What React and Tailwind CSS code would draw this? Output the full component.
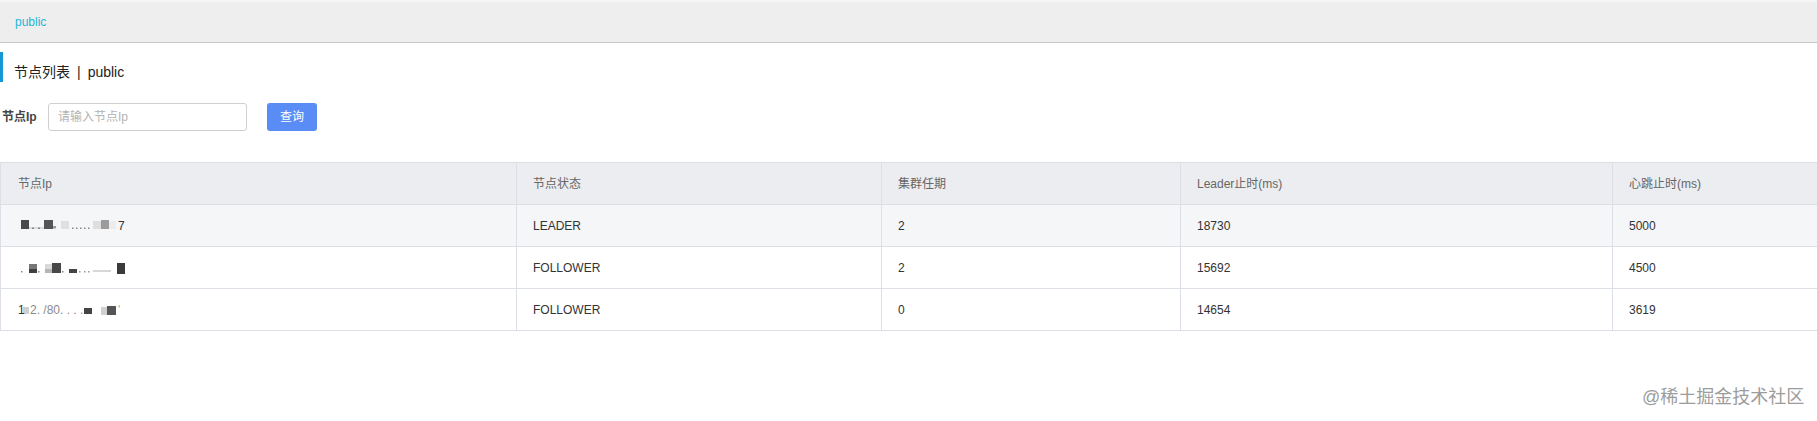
import React from "react";

const FONT = "font-['Liberation_Sans','Noto_Sans_CJK_SC',sans-serif]";
const SVG_FONT = "Liberation Sans, Noto Sans CJK SC, sans-serif";

// Pixelated (masked) IP addresses, drawn as grey mosaic tiles.
const maskedIps = [
  {
    rects: [
      [3, 1, 8, 9, "#4a4a4a"],
      [11, 8.5, 15, 1, "#c4c4c4"],
      [14, 8.5, 2, 1.5, "#888"],
      [20, 8.5, 2, 1.5, "#888"],
      [26, 1, 9, 9, "#555"],
      [35, 7, 3, 2.5, "#9a9a9a"],
      [43, 2, 8, 8, "#e0e0e0"],
      [54, 8.5, 1.5, 1.5, "#888"],
      [58, 8.5, 1.5, 1.5, "#888"],
      [62, 8.5, 1.5, 1.5, "#888"],
      [66, 8.5, 1.5, 1.5, "#888"],
      [70, 8.5, 1.5, 1.5, "#888"],
      [75, 2, 8, 8, "#dedede"],
      [83, 1, 8, 9, "#9c9c9c"],
      [91, 2, 7, 8, "#ececec"],
    ],
    texts: [[100, "7", "#333"]],
  },
  {
    rects: [
      [3, 10, 1.5, 1.5, "#888"],
      [11, 3, 8, 5, "#777"],
      [11, 8, 8, 4, "#3f3f3f"],
      [20, 10, 1.5, 1.5, "#888"],
      [27, 3, 7, 5, "#dadada"],
      [27, 8, 7, 4, "#b5b5b5"],
      [34, 2, 9, 10, "#474747"],
      [44, 10, 1.5, 1.5, "#888"],
      [51, 8, 8, 4, "#444"],
      [61, 10, 1.5, 1.5, "#999"],
      [66, 10, 1.5, 1.5, "#999"],
      [70, 10, 1.5, 1.5, "#999"],
      [75, 9, 18, 2, "#d8d8d8"],
      [99, 2, 8, 11, "#3b3b3b"],
    ],
    texts: [],
  },
  {
    rects: [
      [5, 4, 6, 7, "#cfcfcf"],
      [66, 5, 8, 6, "#444"],
      [83, 4, 6, 8, "#d0d0d0"],
      [89, 3, 9, 9, "#555"],
    ],
    texts: [
      [0, "1", "#333"],
      [12, "2. /80. . . .", "#8a8a8a"],
      [100, "'", "#aaa"],
    ],
  },
];

const rows = [
  { state: "LEADER", term: "2", leader: "18730", beat: "5000" },
  { state: "FOLLOWER", term: "2", leader: "15692", beat: "4500" },
  { state: "FOLLOWER", term: "0", leader: "14654", beat: "3619" },
];

function MaskedIp({ data }) {
  return (
    <svg width="120" height="14" className="block">
      {data.rects.map(([x, y, w, h, c], i) => (
        <rect key={i} x={x} y={y} width={w} height={h} fill={c} />
      ))}
      {data.texts.map(([x, t, c], i) => (
        <text key={i} x={x} y={11} fontSize="12" fontFamily={SVG_FONT} fill={c}>
          {t}
        </text>
      ))}
    </svg>
  );
}

export default function App() {
  return (
    <div className={`relative w-[1817px] h-[421px] bg-white overflow-hidden ${FONT}`}>
      {/* breadcrumb bar */}
      <div className="h-[43px] bg-[#eeeeee] border-t-2 border-t-[#f5f5f5] border-b border-b-[#c8c8c8] pl-[15px] flex items-center text-[12px] text-[#22b6d8]">
        public
      </div>

      {/* section title */}
      <div className="mt-[9px] flex items-center h-[30px]">
        <div className="w-[3px] h-full bg-[#1798d5]" />
        <div className="ml-[11px] pt-[9px] text-[14px] text-[#222222] leading-[20px]">
          节点列表<span className="px-[7px]">|</span>public
        </div>
      </div>

      {/* search form */}
      <div className="mt-[21px] flex items-center h-[28px]">
        <label className="w-[48px] pl-[2px] text-[12px] font-bold text-[#444444]">节点Ip</label>
        <input
          className="w-[199px] h-[28px] border border-[#cfcfcf] rounded-[3px] px-[9px] text-[12px] text-[#333] placeholder:text-[#b3b3b3] outline-none"
          placeholder="请输入节点Ip"
        />
        <button className="ml-[20px] w-[50px] h-[28px] bg-[#5a8cf6] rounded-[3px] text-white text-[12px]">
          查询
        </button>
      </div>

      {/* node table */}
      <table className="mt-[31px] w-[1817px] table-fixed border-collapse text-[12px]">
        <colgroup>
          <col className="w-[516px]" />
          <col className="w-[365px]" />
          <col className="w-[299px]" />
          <col className="w-[432px]" />
          <col className="w-[205px]" />
        </colgroup>
        <thead>
          <tr className="h-[42px] bg-[#ebedf0] text-[#666666] text-left">
            <th className="font-normal pl-[17px] border border-[#dcdfe6]">节点Ip</th>
            <th className="font-normal pl-[16px] border border-[#dcdfe6]">节点状态</th>
            <th className="font-normal pl-[16px] border border-[#dcdfe6]">集群任期</th>
            <th className="font-normal pl-[16px] border border-[#dcdfe6]">Leader止时(ms)</th>
            <th className="font-normal pl-[16px] border border-y-[#dcdfe6] border-l-[#dcdfe6] border-r-transparent">心跳止时(ms)</th>
          </tr>
        </thead>
        <tbody className="text-[#333333]">
          {rows.map((r, i) => (
            <tr key={i} className={`h-[42px] ${i === 0 ? "bg-[#f5f6f8]" : "bg-white"}`}>
              <td className="pl-[17px] border border-[#dcdfe6]">
                <MaskedIp data={maskedIps[i]} />
              </td>
              <td className="pl-[16px] border border-[#dcdfe6]">{r.state}</td>
              <td className="pl-[16px] border border-[#dcdfe6]">{r.term}</td>
              <td className="pl-[16px] border border-[#dcdfe6]">{r.leader}</td>
              <td className="pl-[16px] border border-y-[#dcdfe6] border-l-[#dcdfe6] border-r-transparent">{r.beat}</td>
            </tr>
          ))}
        </tbody>
      </table>

      {/* site watermark */}
      <div className="absolute left-[1642px] top-[386px] text-[18px] leading-[22px] text-[#9c9c9c] whitespace-nowrap">
        @稀土掘金技术社区
      </div>
    </div>
  );
}
